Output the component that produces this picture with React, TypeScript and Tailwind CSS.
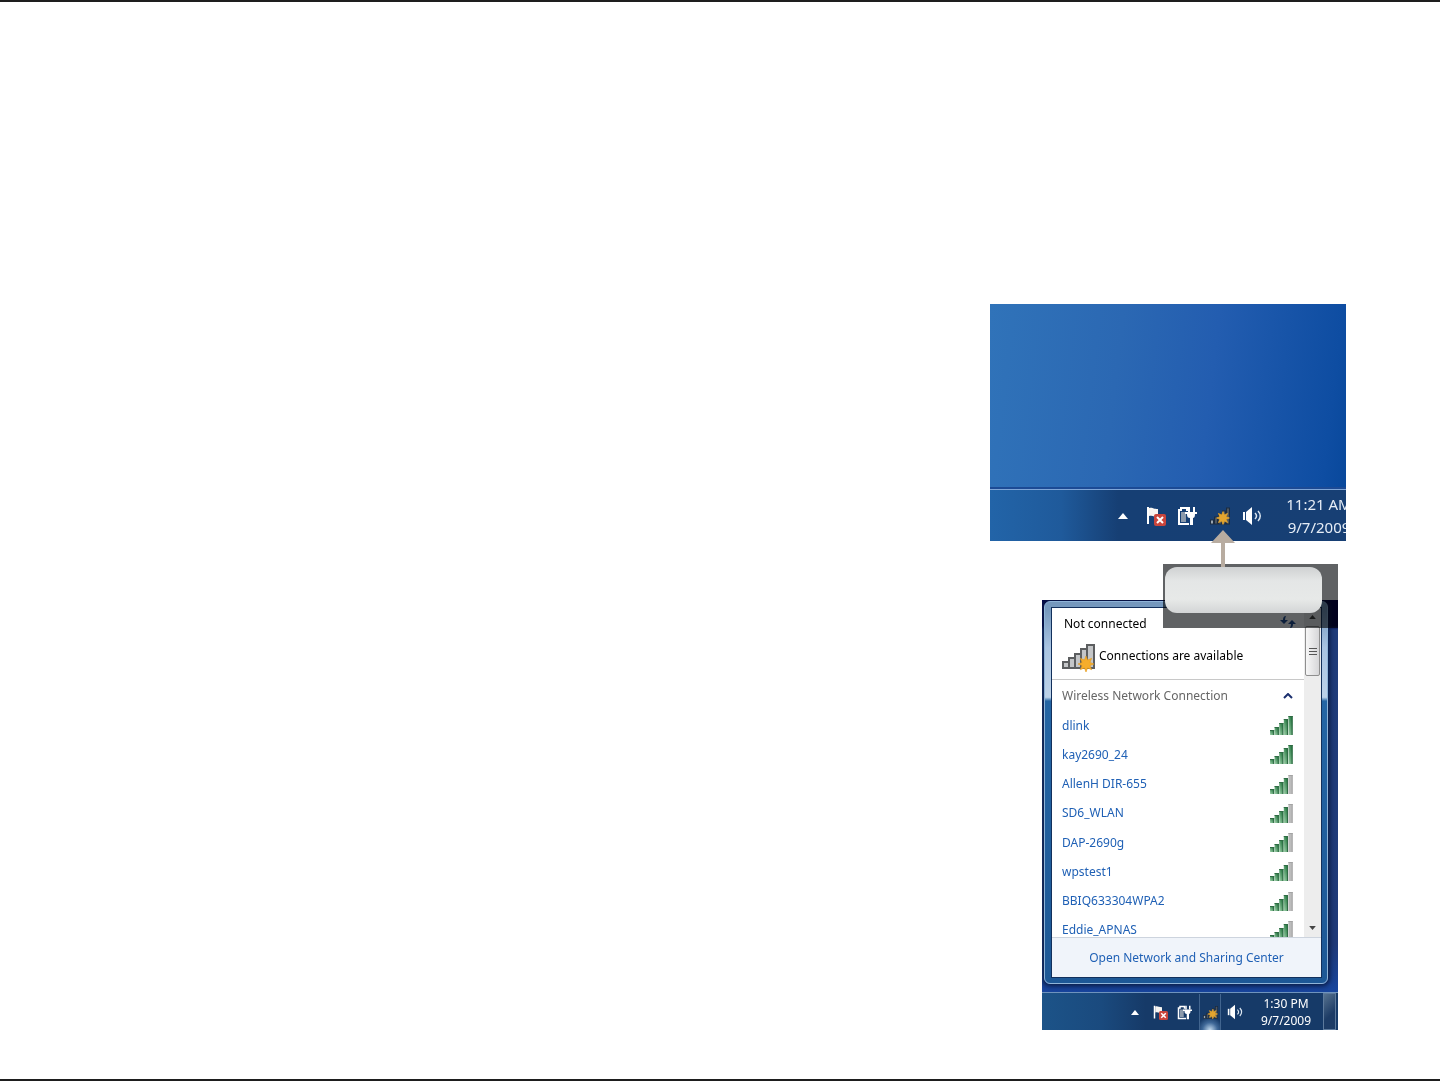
import React from 'react';

interface Network {
  name: string;
  bars: number;
}

const networks: Network[] = [
  { name: 'dlink', bars: 5 },
  { name: 'kay2690_24', bars: 5 },
  { name: 'AllenH DIR-655', bars: 4 },
  { name: 'SD6_WLAN', bars: 4 },
  { name: 'DAP-2690g', bars: 4 },
  { name: 'wpstest1', bars: 4 },
  { name: 'BBIQ633304WPA2', bars: 4 },
  { name: 'Eddie_APNAS', bars: 4 },
];

const STAR = 'M0 -8 L1.6 -3.9 L5.7 -5.7 L3.9 -1.6 L8 0 L3.9 1.6 L5.7 5.7 L1.6 3.9 L0 8 L-1.6 3.9 L-5.7 5.7 L-3.9 1.6 L-8 0 L-3.9 -1.6 L-5.7 -5.7 L-1.6 -3.9 Z';

function FlagIcon({ className }: { className: string }) {
  return (
    <svg viewBox="0 0 20 20" className={className} aria-hidden="true">
      <path d="M1 1h2v17H1z" fill="#fff" />
      <path d="M3 2c4-1 4 1 9 1v8c-4 0-5-2-9-1z" fill="#f7f5f2" />
      <rect x="8" y="8" width="12" height="12" rx="2" fill="#c9453c" />
      <path d="M11 11l6 6M17 11l-6 6" stroke="#fff" strokeWidth="2" />
    </svg>
  );
}

function PowerIcon({ className }: { className: string }) {
  return (
    <svg viewBox="0 0 20 20" className={className} aria-hidden="true">
      <path d="M12 18H2V4h2V2h6v2h1" fill="none" stroke="#fff" strokeWidth="2" />
      <path d="M4 6h5v10H4z" fill="#8c9aab" />
      <path d="M12 1v5M17 1v5" stroke="#fff" strokeWidth="2" />
      <path d="M8 6h12v2h-2c0 3-1 4-2 4v7h-3v-7c-2 0-3-1-3-4H8z" fill="#fff" />
    </svg>
  );
}

function TrayNetworkIcon({ className }: { className: string }) {
  return (
    <svg viewBox="0 0 20 20" className={className} aria-hidden="true">
      <g fill="#4d5660" stroke="#1c2c40">
        <rect x="0.5" y="14" width="3" height="4" fill="#9aa6b2" />
        <rect x="4.5" y="11" width="3" height="7" />
        <rect x="8.5" y="8" width="3" height="10" />
        <rect x="12.5" y="5" width="3" height="13" />
        <rect x="16.5" y="2" width="3" height="16" />
      </g>
      <path d={STAR} transform="translate(13 12) scale(.8)" fill="#e3a52f" stroke="#e3a52f" />
    </svg>
  );
}

function SpeakerIcon({ className }: { className: string }) {
  return (
    <svg viewBox="0 0 20 20" className={className} aria-hidden="true">
      <path d="M1 6h2v8H1z" fill="#fff" />
      <path d="M4 6l6-5v18l-6-5z" fill="#fff" />
      <path d="M13 7c2 2 2 4 0 6M16 5c3 3 3 7 0 10" fill="none" stroke="#dce6f0" strokeWidth="1.5" />
    </svg>
  );
}

function Triangle({ className, down = false }: { className: string; down?: boolean }) {
  return (
    <svg viewBox="0 0 10 6" className={className} aria-hidden="true">
      <path d={down ? 'M0 0h10L5 6z' : 'M0 6h10L5 0z'} fill="currentColor" />
    </svg>
  );
}

function SignalBars({ bars }: { bars: number }) {
  return (
    <svg viewBox="0 0 24 19" className="h-[19px] w-6 shrink-0" aria-hidden="true">
      <defs>
        <linearGradient id={`signal-${bars}`} x1="0" x2="1" y1="1" y2="0">
          <stop offset="0.1" stopColor="#93c9a0" />
          <stop offset="0.8" stopColor="#2a7a45" />
        </linearGradient>
      </defs>
      {[5, 8, 12, 16, 19].map((height, i) => (
        <g key={height}>
          <rect
            x={i * 4.6}
            y={19 - height}
            width={4.2}
            height={height}
            fill={i < bars ? `url(#signal-${bars})` : '#bcbcbc'}
          />
          <path
            d={`M${i * 4.6} ${19.5 - height}h4.2M${i * 4.6 + 3.7} ${19 - height}v${height}`}
            stroke={i < bars ? '#2f6b44' : '#a3a3a3'}
          />
        </g>
      ))}
    </svg>
  );
}

function AvailableIcon() {
  return (
    <svg viewBox="0 0 34 28" className="h-7 w-[34px] shrink-0" aria-hidden="true">
      <g fill="#c4c6c8" stroke="#5c5e60" strokeWidth="2">
        <rect x="1" y="18" width="6" height="6" />
        <rect x="7" y="14" width="6" height="10" />
        <rect x="13" y="10" width="6" height="14" />
        <rect x="19" y="5" width="6" height="19" />
        <rect x="25" y="1" width="7" height="23" />
      </g>
      <path d={STAR} transform="translate(24 20)" fill="#f5ad2c" stroke="#e59a1c" strokeWidth="0.6" />
    </svg>
  );
}

function DesktopFigure() {
  return (
    <figure className="mr-[94px] flex h-[237px] w-[356px] flex-col overflow-hidden bg-[linear-gradient(97deg,#3073b9_0%,#2b68b3_35%,#235db0_60%,#0e4da2_92%,#07479a_100%)]">
      <div className="flex-1 border-b-2 border-[#1c4a94]" />
      <div className="flex h-[52px] items-center border-t border-[#7fa6d8] bg-[linear-gradient(90deg,#2264a8_0%,#1f5a9b_20%,#163f74_36%,#173f74_100%)] text-white">
        <div className="ml-[128px] flex items-center">
          <button aria-label="Show hidden icons" className="mr-[18px]">
            <Triangle className="h-[6px] w-[10px]" />
          </button>
          <button aria-label="Action Center" className="mr-[11px]">
            <FlagIcon className="size-5" />
          </button>
          <button aria-label="Power" className="mr-[13px]">
            <PowerIcon className="size-5" />
          </button>
          <button aria-label="Network" className="mr-3">
            <TrayNetworkIcon className="size-5" />
          </button>
          <button aria-label="Volume">
            <SpeakerIcon className="size-5" />
          </button>
        </div>
        <div className="ml-6 w-[66px] shrink-0 text-center text-[15px] leading-[23px] whitespace-nowrap text-[#e6edf6]">
          <div>11:21 AM</div>
          <div>9/7/2009</div>
        </div>
      </div>
    </figure>
  );
}

function Callout() {
  return (
    <>
      <div className="absolute -top-9 right-0 h-16 w-[175px] bg-[#606264] mix-blend-multiply" />
      <div className="absolute -top-9 right-0 h-16 w-[175px] pt-[3px] pl-[2px]">
        <div className="h-[46px] w-[157px] rounded-xl bg-[linear-gradient(180deg,#cfd1d2_0%,#e4e6e6_30%,#e7e9e8_70%,#d3d5d6_100%)]" />
        <svg viewBox="0 0 24 37" className="absolute -top-[34px] left-12 h-[37px] w-6" aria-hidden="true">
          <path d="M12 0l12 13H14v24h-4V13H0z" fill="#b8aca0" />
        </svg>
      </div>
    </>
  );
}

function NetworkFlyout() {
  return (
    <div className="mr-[10px] ml-[2px] rounded-md border border-[#8fb4d8] bg-[linear-gradient(180deg,#7598bd_0%,#7598bd_2%,#a9c4e2_12%,#bdd2e8_25%,#2465a4_26%,#1d5896_100%)] p-[5px] pl-[6px] shadow-[0_0_5px_2px_#0a1c44]">
      <section className="flex h-[371px] flex-col border border-[#12305c] bg-white text-xs">
        <div className="flex min-h-0 flex-1">
          <div className="min-w-0 flex-1 overflow-hidden">
            <div className="flex h-8 items-start justify-between pt-2 pr-2 pl-3 text-black">
              <h2>Not connected</h2>
              <button aria-label="Refresh" className="text-[#1f4f96]">
                <svg viewBox="0 0 16 12" className="h-3 w-4" aria-hidden="true">
                  <path d="M6 0Q3 0 3 4H0l4 4 4-4H5Q5 2 6 0zM10 12q3 0 3-4h3l-4-4-4 4h3q0 2-1 4z" fill="currentColor" />
                </svg>
              </button>
            </div>
            <div className="flex h-10 items-start gap-[3px] border-b border-[#c8c8c8] pt-1 pl-[10px] text-black">
              <AvailableIcon />
              <span className="leading-6">Connections are available</span>
            </div>
            <div className="flex h-[31px] items-center justify-between pr-[11px] pl-[10px] text-[#666]">
              <h3>Wireless Network Connection</h3>
              <button aria-label="Collapse" className="text-[#1b2f6e]">
                <svg viewBox="0 0 10 6" className="h-[6px] w-[10px]" aria-hidden="true">
                  <path d="M1 5l4-4 4 4" fill="none" stroke="currentColor" strokeWidth="2" />
                </svg>
              </button>
            </div>
            <ul className="grid h-[234px] grid-rows-8">
              {networks.map((network) => (
                <li key={network.name}>
                  <button className="flex h-full w-full items-center justify-between px-[10px] text-[#1f60b5]">
                    {network.name}
                    <SignalBars bars={network.bars} />
                  </button>
                </li>
              ))}
            </ul>
          </div>
          <div className="flex w-[17px] flex-col items-center bg-[#ededed] text-[#444]">
            <button aria-label="Scroll up" className="flex h-[18px] items-center">
              <Triangle className="h-1 w-[7px]" />
            </button>
            <div className="flex h-[50px] w-[15px] flex-col items-center justify-center gap-[2px] rounded-xs border border-[#8f8f8f] bg-[linear-gradient(90deg,#f7f7f7,#d6d6d8)]">
              <span className="h-px w-2 bg-[#555]" />
              <span className="h-px w-2 bg-[#555]" />
              <span className="h-px w-2 bg-[#555]" />
            </div>
            <button aria-label="Scroll down" className="mt-auto flex h-[18px] items-center">
              <Triangle className="h-1 w-[7px]" down />
            </button>
          </div>
        </div>
        <div className="flex h-10 items-center justify-center border-t border-[#cdd4de] bg-[#f0f4fa]">
          <a href="#" className="text-[#1f60b5]">
            Open Network and Sharing Center
          </a>
        </div>
      </section>
    </div>
  );
}

function FlyoutFigure() {
  return (
    <figure className="relative mt-[59px] mr-[102px] w-[296px]">
      <div className="overflow-hidden bg-[linear-gradient(180deg,#02024a_0%,#02024a_6%,#1f3c7a_7%,#1f3a78_80%,#1746a0_92%)] pt-[1px]">
        <NetworkFlyout />
        <div className="relative mt-2 flex h-[38px] items-center border-t border-[#6f93bd] bg-[linear-gradient(90deg,#1c5388_0%,#1a4a7e_20%,#163a68_35%,#163a68_100%)] text-white">
          <div className="ml-[89px] flex h-full items-center pt-px">
            <button aria-label="Show hidden icons" className="mr-[14px]">
              <Triangle className="h-[5px] w-2" />
            </button>
            <button aria-label="Action Center" className="mr-[9px]">
              <FlagIcon className="size-[15px]" />
            </button>
            <button aria-label="Power" className="mr-[7px]">
              <PowerIcon className="size-[15px]" />
            </button>
            <button
              aria-label="Network"
              className="mr-[6px] flex h-full w-[22px] items-center justify-center border-x border-[#42658f] bg-[radial-gradient(circle_at_bottom,#c5dcf0_0%,#3f6898_20%,#163a68_35%)]"
            >
              <TrayNetworkIcon className="size-[15px]" />
            </button>
            <button aria-label="Volume">
              <SpeakerIcon className="size-4" />
            </button>
          </div>
          <div className="ml-[15px] w-[56px] pt-px text-center text-xs leading-[17px] whitespace-nowrap">
            <div>1:30 PM</div>
            <div>9/7/2009</div>
          </div>
          <button
            aria-label="Show desktop"
            className="mr-[2px] ml-auto h-full w-[13px] border border-[#5d7a9c] bg-[linear-gradient(135deg,#56728f,#1d3c66_60%)]"
          />
        </div>
      </div>
      <Callout />
    </figure>
  );
}

export default function App() {
  return (
    <main className="flex min-h-screen flex-col items-end border-y-2 border-[#1e1e1e] bg-white pt-[302px] pb-[49px] font-['Noto_Sans','Open_Sans',sans-serif]">
      <DesktopFigure />
      <FlyoutFigure />
    </main>
  );
}
